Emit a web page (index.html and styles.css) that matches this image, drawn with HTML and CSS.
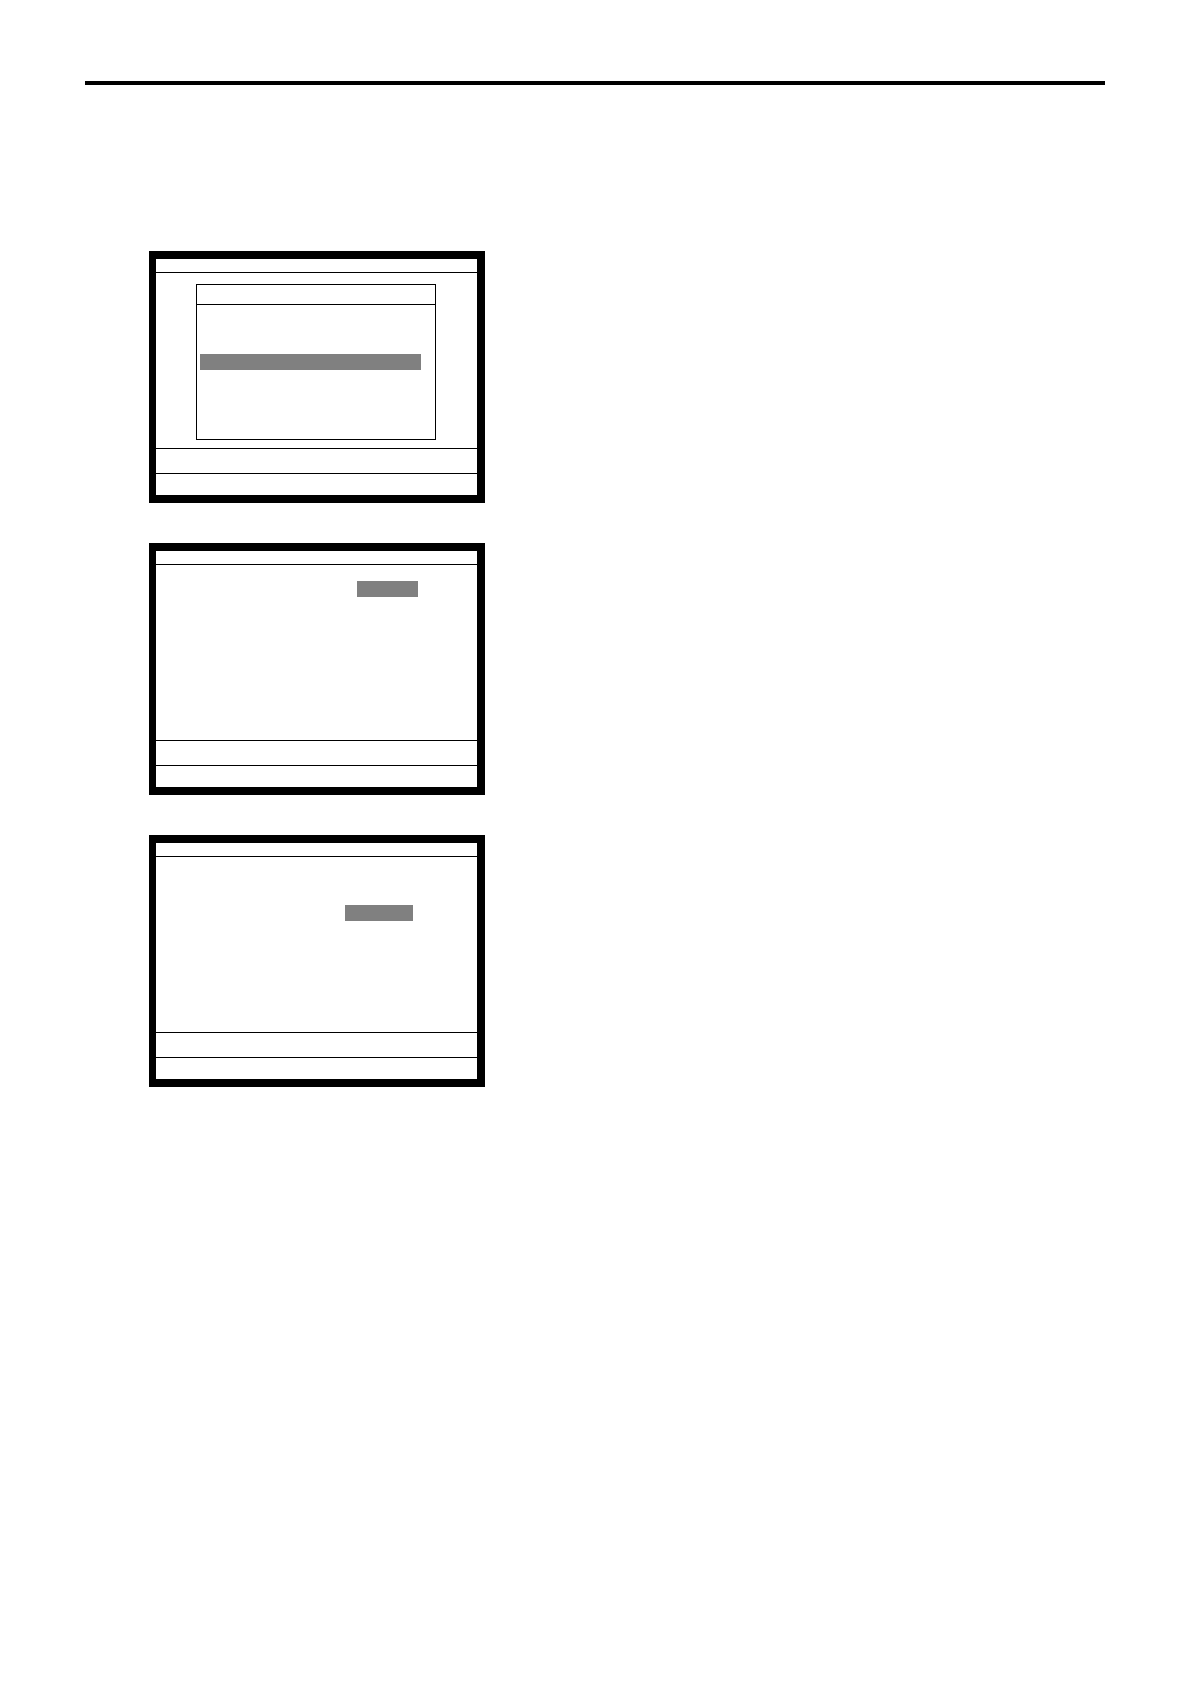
FILE: index.html
```html
<!DOCTYPE html>
<html lang="en">
<head>
  <meta charset="utf-8">
  <meta name="viewport" content="width=device-width, initial-scale=1">
  <title>Screens</title>
  <link rel="stylesheet" href="styles.css">
</head>
<body>
  <header class="page-header"></header>
  <main class="screens">
    <section class="screen">
      <div class="screen-title"></div>
      <div class="screen-body screen-body-menu">
        <div class="menu">
          <div class="menu-title"></div>
          <div class="menu-list">
            <div class="highlight"></div>
          </div>
        </div>
      </div>
      <div class="screen-message"></div>
      <div class="screen-footer"></div>
    </section>
    <section class="screen">
      <div class="screen-title"></div>
      <div class="screen-body screen-body-first-field">
        <div class="highlight"></div>
      </div>
      <div class="screen-message"></div>
      <div class="screen-footer"></div>
    </section>
    <section class="screen">
      <div class="screen-title"></div>
      <div class="screen-body screen-body-third-field">
        <div class="highlight"></div>
      </div>
      <div class="screen-message"></div>
      <div class="screen-footer"></div>
    </section>
  </main>
</body>
</html>
```

FILE: styles.css
```css
* {
  box-sizing: border-box;
}

body {
  margin: 0;
  padding: 81px 85px;
  background: #fff;
  color: #000;
  font-family: "Liberation Sans", Arial, sans-serif;
}

.page-header {
  border-top: 4px solid #000;
}

.screens {
  display: flex;
  flex-direction: column;
  gap: 40px;
  padding: 166px 64px 0;
}

.screen {
  width: 100%;
  max-width: 336px;
  border: 8px solid #000;
  border-left-width: 7px;
}

.screen-title {
  min-height: 14px;
  border-bottom: 1px solid #000;
}

.screen-body {
  min-height: 175px;
}

.screen-body-menu {
  padding: 11px 41px 8px 40px;
}

.screen-body-first-field {
  padding: 16px 59px 0 201px;
}

.screen-body-third-field {
  padding: 48px 64px 0 189px;
}

.screen-message {
  min-height: 25px;
  border-top: 1px solid #000;
}

.screen-footer {
  min-height: 22px;
  border-top: 1px solid #000;
}

.menu {
  border: 1px solid #000;
}

.menu-title {
  min-height: 20px;
  border-bottom: 1px solid #000;
}

.menu-list {
  min-height: 134px;
  padding: 49px 14px 0 3px;
}

.highlight {
  min-height: 16px;
  background: #808080;
}
```
